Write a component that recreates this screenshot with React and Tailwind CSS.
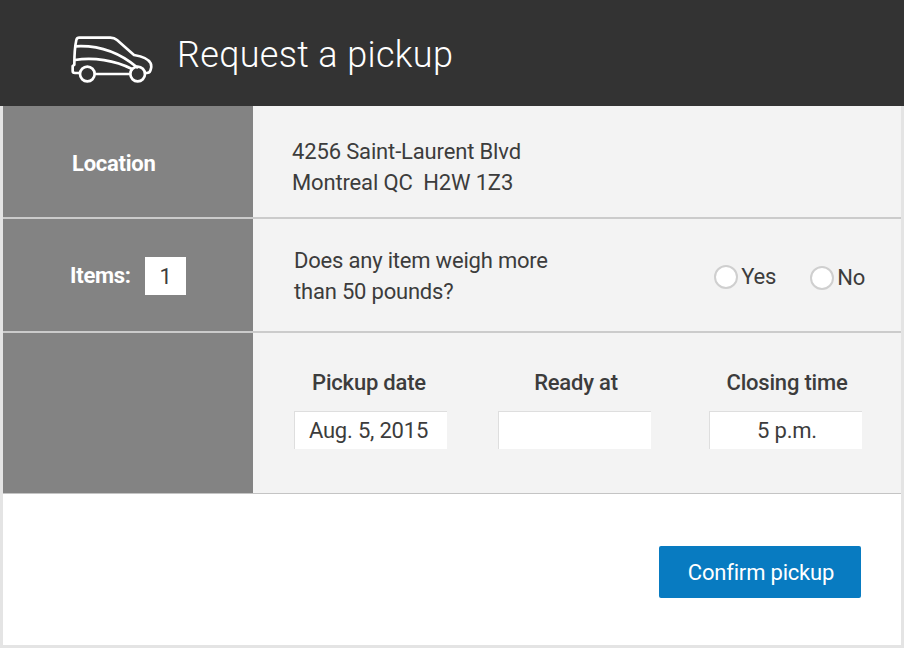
import { useState } from "react";

function CarIcon() {
  return (
    <svg
      viewBox="30 27 252 150"
      className="h-[50px] w-[84px] shrink-0"
      fill="none"
      stroke="#fff"
      strokeWidth="8"
      strokeLinecap="round"
      strokeLinejoin="round"
    >
      <path d="M58 144H45Q38 144 38 138V123L43 119Q43 72 49 45Q51 38 58 38H151Q163 38 171 45L222 90Q264 97 272 115Q276 124 271 137Q269 144 260 144H255" />
      <path d="M105 147H210" />
      <path d="M47 64C120 60 180 84 231 127" />
      <path d="M45 105C100 96 165 106 216 132" />
      <circle cx="82" cy="147" r="22" />
      <circle cx="233" cy="147" r="22" />
    </svg>
  );
}

function SideCell({ children }) {
  return (
    <div className="flex w-[250px] shrink-0 items-center bg-[#838383] pt-[2px] font-bold tracking-[-0.25px] text-white">
      {children}
    </div>
  );
}

function Radio({ label, checked, onChange, className }) {
  return (
    <label className={`flex items-center gap-[3px] ${className}`}>
      <input
        type="radio"
        name="heavy"
        checked={checked}
        onChange={onChange}
        className="size-6 appearance-none rounded-full border-2 border-[#cfcfcf] bg-white checked:border-8 checked:border-[#087bc1]"
      />
      <span>{label}</span>
    </label>
  );
}

function TimeField({ label, value, className = "", labelClass = "", valueClass = "" }) {
  return (
    <div className={`flex w-[153px] flex-col items-center ${className}`}>
      <span className={`font-medium leading-[30px] whitespace-nowrap ${labelClass}`}>{label}</span>
      <div
        className={`mt-[13px] flex h-[38px] w-full items-center justify-center border-t border-l border-[#dedede] bg-white pt-px ${valueClass}`}
      >
        {value}
      </div>
    </div>
  );
}

export default function App() {
  const [heavy, setHeavy] = useState(null);

  return (
    <div className="flex h-[648px] w-[904px] flex-col overflow-hidden bg-white font-['Roboto','Liberation_Sans',sans-serif] text-[22px] leading-[30px] tracking-[-0.2px] text-[#3c3c3c]">
      <header className="flex h-[106px] shrink-0 items-center bg-[#333] pt-3 pl-[70px]">
        <CarIcon />
        <h1 className="mb-2 ml-[23px] text-[36px] font-light leading-[44px] tracking-[0.35px] text-white">
          Request a pickup
        </h1>
      </header>

      <main className="flex flex-1 flex-col border-x-[3px] border-b-[3px] border-[#e4e4e4]">
        <section className="flex h-[113px] border-b-2 border-[#cbcbcb]">
          <SideCell>
            <span className="pt-[2px] pl-[69px]">Location</span>
          </SideCell>
          <div className="flex flex-1 items-center bg-[#f3f3f3] pt-[10px] pl-[39px]">
            <p className="leading-[31px] tracking-[-0.15px] whitespace-pre">
              {"4256 Saint-Laurent Blvd\nMontreal QC  H2W 1Z3"}
            </p>
          </div>
        </section>

        <section className="flex h-[114px] border-b-2 border-[#cbcbcb]">
          <SideCell>
            <span className="w-[142px] pl-[67px]">Items:</span>
            <span className="flex h-[38px] w-[41px] items-center justify-center bg-white pt-[2px] font-normal text-[#3c3c3c]">
              1
            </span>
          </SideCell>
          <div className="flex flex-1 items-center bg-[#f3f3f3] pt-[2px] pl-[41px]">
            <p className="leading-[31px]">
              Does any item weigh more
              <br />
              than 50 pounds?
            </p>
            <div className="ml-auto flex pr-[36px]">
              <Radio label="Yes" checked={heavy === true} onChange={() => setHeavy(true)} className="pt-[2px]" />
              <Radio label="No" checked={heavy === false} onChange={() => setHeavy(false)} className="ml-[34px] pt-[3px]" />
            </div>
          </div>
        </section>

        <section className="flex h-[161px] border-b border-[#c4c4c4]">
          <SideCell />
          <div className="flex flex-1 bg-[#f3f3f3] pt-[35px] pl-[41px]">
            <TimeField label="Pickup date" value="Aug. 5, 2015" labelClass="pr-[3px]" valueClass="pr-[5px]" />
            <TimeField label="Ready at" className="ml-[51px]" labelClass="pl-[3px]" />
            <TimeField
              label="Closing time"
              value="5 p.m."
              className="ml-[58px]"
              labelClass="pl-[3px]"
              valueClass="pl-[2px]"
            />
          </div>
        </section>

        <footer className="flex justify-end pt-[52px] pr-10">
          <button className="h-[52px] w-[202px] rounded-[2px] bg-[#087bc1] pt-[2px] pl-[2px] text-white">
            Confirm pickup
          </button>
        </footer>
      </main>
    </div>
  );
}
